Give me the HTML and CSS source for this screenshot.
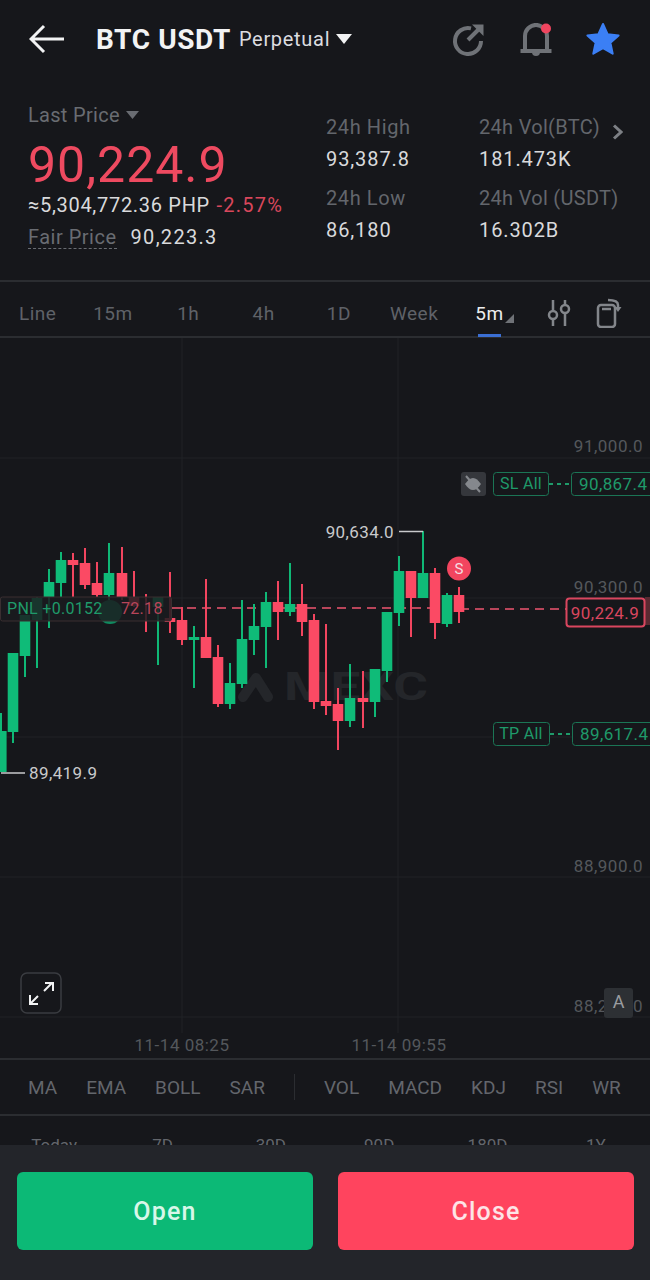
FILE: index.html
```html
<!DOCTYPE html>
<html lang="en">
<head>
<meta charset="utf-8">
<title>BTC USDT Perpetual</title>
<link rel="stylesheet" href="styles.css">
</head>
<body>
<div class="page">
  <header class="topbar">
    <svg class="back" width="36" height="30" viewBox="0 0 36 30"><path d="M35 15H2M15 2 2 15l13 13"/></svg>
    <span class="pair">BTC USDT</span>
    <span class="kind">Perpetual</span>
    <svg class="kind-caret" width="16" height="10" viewBox="0 0 16 10"><path d="M0 0h16L8 10z"/></svg>
    <div class="top-icons">
      <svg width="36" height="36" viewBox="0 0 36 36"><path class="ic-stroke" d="M20 7.400A13 13 0 1 0 30 20"/><path class="ic-stroke" d="M17 19 28 8"/><path class="ic-fill" d="M21 3.500h11.500V15z"/></svg>
      <svg width="36" height="36" viewBox="0 0 36 36"><path class="ic-stroke" d="M7 30V15a11 11 0 0 1 22 0v15M2.500 30h31M18 4V2"/><path class="ic-fill" d="M14 31h8a4 4 0 0 1-8 0z"/><circle class="ic-dot" cx="28" cy="7.500" r="5"/></svg>
      <svg width="36" height="36" viewBox="0 0 36 36"><path class="ic-star" d="M18 3l4.600 10.200 11 1.200-8.200 7.400 2.300 10.900L18 27.200 8.300 32.700l2.300-10.900L2.400 14.400l11-1.200z"/></svg>
    </div>
  </header>

  <section class="stats">
    <div class="price-col">
      <div class="last-label">Last Price <svg width="13" height="8" viewBox="0 0 13 8"><path d="M0 0h13L6.500 8z"/></svg></div>
      <div class="last-price">90,224.9</div>
      <div class="fiat">≈5,304,772.36 PHP <span class="neg">-2.57%</span></div>
      <div class="fair"><span class="fair-label">Fair Price</span><span class="fair-val">90,223.3</span></div>
    </div>
    <div class="stat-grid">
      <div class="stat stat-a"><span class="stat-label">24h High</span><span class="stat-val">93,387.8</span></div>
      <div class="stat"><span class="stat-label">24h Vol(BTC)<svg class="more" width="11" height="16" viewBox="0 0 11 16"><path d="M2 1.500 9 8l-7 6.500"/></svg></span><span class="stat-val">181.473K</span></div>
      <div class="stat stat-a"><span class="stat-label">24h Low</span><span class="stat-val">86,180</span></div>
      <div class="stat"><span class="stat-label">24h Vol (USDT)</span><span class="stat-val">16.302B</span></div>
    </div>
  </section>

  <nav class="intervals">
    <span class="iv">Line</span><span class="iv">15m</span><span class="iv">1h</span><span class="iv">4h</span><span class="iv">1D</span><span class="iv">Week</span>
    <span class="iv iv-on">5m<svg class="iv-caret" width="9" height="9" viewBox="0 0 9 9"><path d="M9 0v9H0z"/></svg></span>
    <svg class="tool-a" width="26" height="30" viewBox="0 0 26 30"><path d="M7 2v10M7 22v6M19 2v4M19 16v12"/><circle cx="7" cy="17" r="4"/><circle cx="19" cy="11" r="4"/></svg>
    <svg class="tool-b" width="26" height="30" viewBox="0 0 26 30"><rect x="2" y="7" width="17" height="22" rx="3"/><path d="M6 11h9"/><path d="M12 2c6 0 10 1 10 5v5"/><path class="tool-tip" d="M18.500 9h7L22 14z"/></svg>
  </nav>

  <div class="chart">
    <svg class="chart-svg" width="650" height="722" viewBox="0 338 650 722">
      <path class="grid" d="M0 458H650M0 598H650M0 737H650M0 877H650M0 1017H650M182 338V1033M398 338V1033"/>
      <path class="mark" d="M243 697 256 678 268 697"/>
      <text class="mark-text" x="284" y="700" textLength="144" lengthAdjust="spacingAndGlyphs">MEXC</text>

      <path class="dash-r" d="M172 608H460M460 609H566"/>

      <path class="wick-g" d="M1 713V772M13 653V743M25 615V677M37 597V668M49 569V628M61 552V597M109 543V600M158 597V665M194 626V688M230 663V709M242 600V688M254 604V655M266 592V668M290 563V616M350 664V727M375 669V717M387 612V682M399 556V626M423 531V598M447 593V627"/>
      <path class="body-g" d="M-4 731h10.600V772h-10.600zM7.700 653h10.600V732H7.700zM19.700 615h10.600V656H19.700zM31.700 598h10.600V620H31.700zM43.700 582h10.600V597H43.700zM55.700 560h10.600V583H55.700zM103.700 573h10.600V595H103.700zM152.700 597h10.600V607H152.700zM188.700 637h10.600V640H188.700zM224.700 683h10.600V704H224.700zM236.700 639h10.600V684H236.700zM248.700 626h10.600V640H248.700zM260.700 602h10.600V627H260.700zM284.700 604h10.600V612H284.700zM344.700 698h10.600V721H344.700zM369.700 669h10.600V702H369.700zM381.700 612h10.600V671H381.700zM393.700 571h10.600V613H393.700zM417.700 573h10.600V598H417.700zM441.700 595h10.600V624H441.700z"/>
      <path class="wick-r" d="M73 553V597M85 548V589M97 562V597M122 547V600M134 571V607M146 594V632M170 572V633M182 607V645M206 579V658M218 645V707M278 581V640M302 584V636M314 614V709M326 624V715M338 688V750M363 671V728M411 571V637M435 568V639M459 587V623"/>
      <path class="body-r" d="M67.700 560h10.600V565H67.700zM79.700 563h10.600V585H79.700zM91.700 583h10.600V595H91.700zM116.700 573h10.600V597H116.700zM128.700 597h10.600V606H128.700zM164.700 618h10.600V622H164.700zM176.700 620h10.600V640H176.700zM200.700 637h10.600V658H200.700zM212.700 657h10.600V704H212.700zM272.700 602h10.600V612H272.700zM296.700 604h10.600V622H296.700zM308.700 620h10.600V702H308.700zM320.700 701h10.600V706H320.700zM332.700 704h10.600V721H332.700zM357.700 698h10.600V702H357.700zM405.700 571h10.600V598H405.700zM429.700 573h10.600V623H429.700zM453.700 595h10.600V612H453.700z"/>

      <circle class="pos-dot" cx="110" cy="612" r="12"/>
      <rect class="pnl-box" x="0.500" y="597" width="171" height="24" rx="2"/>
      <text class="pnl-g" x="7" y="614">PNL +0.0152</text>
      <text class="pnl-r" x="121" y="614">72.18</text>

      <text class="axis" x="643" y="452" text-anchor="end">91,000.0</text>
      <text class="axis" x="643" y="593" text-anchor="end">90,300.0</text>
      <text class="axis" x="643" y="872" text-anchor="end">88,900.0</text>
      <text class="axis" x="643" y="1012" text-anchor="end">88,200.0</text>

      <rect class="eye-box" x="461" y="472" width="25" height="24" rx="3"/>
      <path class="eye" d="M465 484c3-4 5-6 8-6s5 2 8 6c-3 4-5 6-8 6s-5-2-8-6z"/>
      <path class="eye-cut" d="M466 476l14 16"/>

      <rect class="tag" x="493.500" y="472.500" width="55" height="23" rx="3"/>
      <text class="tag-text" x="521" y="489" text-anchor="middle">SL All</text>
      <path class="dash-g" d="M549 484H571"/>
      <rect class="tag" x="571.500" y="472.500" width="90" height="23" rx="3"/>
      <text class="tag-num" x="579" y="490">90,867.4</text>

      <rect class="tag" x="493.500" y="722.500" width="56" height="23" rx="3"/>
      <text class="tag-text" x="521" y="739" text-anchor="middle">TP All</text>
      <path class="dash-g" d="M550 734H572"/>
      <rect class="tag" x="572.500" y="722.500" width="90" height="23" rx="3"/>
      <text class="tag-num" x="580" y="740">89,617.4</text>

      <rect class="now-tail" x="645" y="597" width="6" height="28"/>
      <rect class="now-box" x="566.500" y="598.500" width="78" height="28" rx="3"/>
      <text class="now-text" x="605" y="619" text-anchor="middle">90,224.9</text>

      <path class="hl" d="M399 531.500H423"/>
      <text class="hl-text" x="394" y="538" text-anchor="end">90,634.0</text>
      <path class="hl" d="M1 773H25"/>
      <text class="hl-text" x="29" y="779">89,419.9</text>

      <circle class="s-dot" cx="459" cy="568.500" r="12"/>
      <text class="s-text" x="459" y="574" text-anchor="middle">S</text>

      <rect class="exp-box" x="21" y="973" width="40" height="40" rx="6"/>
      <path class="exp" d="M44 991 52 983M45 983h8v8M38 996l-7 7M30 995v9h8"/>
      <rect class="a-box" x="604" y="988" width="29" height="30" rx="3"/>
      <text class="a-text" x="618.500" y="1008" text-anchor="middle">A</text>

      <text class="axis" x="182" y="1051" text-anchor="middle">11-14 08:25</text>
      <text class="axis" x="399" y="1051" text-anchor="middle">11-14 09:55</text>
    </svg>
  </div>

  <nav class="indicators">
    <span>MA</span><span>EMA</span><span>BOLL</span><span>SAR</span><i class="ind-sep"></i><span>VOL</span><span>MACD</span><span>KDJ</span><span>RSI</span><span>WR</span>
  </nav>

  <nav class="ranges">
    <span>Today</span><span>7D</span><span>30D</span><span>90D</span><span>180D</span><span>1Y</span>
  </nav>

  <footer class="actions">
    <button class="btn btn-open">Open</button>
    <button class="btn btn-close">Close</button>
  </footer>
</div>
</body>
</html>
```
FILE: styles.css
```css
* { box-sizing: border-box; }
html, body { margin: 0; padding: 0; background: #16171b; }
body { font-family: Roboto, "Liberation Sans", sans-serif; color: #d9dadc; }
.page { width: 650px; height: 1280px; overflow: hidden; display: flex; flex-direction: column; }

.topbar { height: 78px; flex: none; display: flex; align-items: center; padding: 0 29px 0 29px; }
.back { flex: none; }
.back path { fill: none; stroke: #f2f3f4; stroke-width: 3; }
.pair { margin-left: 31px; font-size: 28px; font-weight: 700; color: #f2f3f4; letter-spacing: 0.6px; }
.kind { margin-left: 8px; font-size: 20px; color: #dcdde0; letter-spacing: 0.7px; }
.kind-caret { margin-left: 6px; fill: #f2f3f4; }
.top-icons { margin-left: auto; display: flex; gap: 31px; }
.ic-stroke { fill: none; stroke: #6f7277; stroke-width: 4; stroke-linejoin: round; }
.ic-fill { fill: #6f7277; }
.ic-dot { fill: #f0455f; }
.ic-star { fill: #3b7ff5; stroke: #3b7ff5; stroke-width: 2; stroke-linejoin: round; }

.stats { height: 204px; flex: none; display: flex; border-bottom: 2px solid #2b2d31; }
.price-col { width: 326px; padding: 25px 0 0 28px; }
.last-label { height: 24px; line-height: 24px; font-size: 20px; color: #696c72; letter-spacing: 0.3px; white-space: nowrap; }
.last-label svg { fill: #696c72; margin-left: 1px; vertical-align: 3px; }
.last-price { margin-top: 8px; height: 60px; line-height: 60px; font-size: 50px; color: #ee4a60; letter-spacing: 1px; }
.fiat { margin-top: -2px; height: 24px; line-height: 24px; font-size: 20px; color: #d9dadc; letter-spacing: 0.7px; white-space: nowrap; }
.neg { color: #d9475c; margin-left: 1px; letter-spacing: 1.200px; }
.fair { margin-top: 8px; height: 24px; line-height: 24px; font-size: 20px; letter-spacing: 0.5px; display: flex; gap: 14px; }
.fair-label { color: #696c72; border-bottom: 1px dashed #696c72; }
.fair-val { letter-spacing: 1.300px; }

.stat-grid { flex: 1; padding-top: 37px; display: grid; grid-template-columns: 153px 1fr; grid-auto-rows: 56px; row-gap: 15px; }
.stat { display: flex; flex-direction: column; gap: 8px; }
.stat-label { height: 24px; line-height: 24px; font-size: 20px; color: #63666c; letter-spacing: 0.3px; white-space: nowrap; }
.stat-a .stat-label { letter-spacing: 0.6px; }
.stat-val { height: 24px; line-height: 24px; font-size: 20px; color: #d9dadc; letter-spacing: 0.9px; }
.more { margin-left: 12px; vertical-align: -6px; fill: none; stroke: #7d8085; stroke-width: 3; }

.intervals { height: 56px; padding-top: 8px; display: flex; align-items: center; border-bottom: 2px solid #2b2d31; flex: none; }
.iv { width: 75.3px; text-align: center; font-size: 19px; color: #5f6268; letter-spacing: 0.5px; flex: none; }
.iv-on { color: #eceded; position: relative; height: 21px; line-height: 21px; }
.iv-on::after { content: ""; position: absolute; left: 26px; bottom: -13px; width: 23px; height: 3px; background: #3b6fd4; }
.iv-caret { fill: #6f7277; position: absolute; margin-left: 1px; top: 11px; }
.tool-a { margin-left: 19px; fill: none; stroke: #83868b; stroke-width: 2.500; flex: none; }
.tool-b { margin-left: 24px; fill: none; stroke: #83868b; stroke-width: 2.500; flex: none; }
.tool-tip { fill: #83868b; stroke: none; }

.chart { height: 722px; flex: none; border-bottom: 2px solid #2b2d31; }
.chart-svg { display: block; font-family: Roboto, "Liberation Sans", sans-serif; }
.grid { stroke: #212327; stroke-width: 1; fill: none; }
.mark { fill: none; stroke: #24262a; stroke-width: 10; stroke-linecap: round; stroke-linejoin: round; }
.mark-text { font-size: 38px; font-weight: 700; fill: #24262a; }
.wick-g { stroke: #0fb876; stroke-width: 2; fill: none; }
.body-g { fill: #0fbb78; }
.wick-r { stroke: #f2455f; stroke-width: 2; fill: none; }
.body-r { fill: #fb4a64; }
.dash-r { stroke: #b8455a; stroke-width: 2; stroke-dasharray: 9 6; fill: none; }
.pos-dot { fill: #0f8a5f; }
.pnl-box { fill: #1a1c1f; fill-opacity: 0.84; stroke: #3a2f31; }
.pnl-g { font-size: 16px; fill: #1f9a6a; letter-spacing: 0.3px; }
.pnl-r { font-size: 16px; fill: #b8455a; letter-spacing: 0.3px; }
.axis { font-size: 17px; fill: #54575c; letter-spacing: 0.5px; }
.eye-box { fill: #35373c; }
.eye { fill: #85888d; }
.eye-cut { fill: none; stroke: #85888d; stroke-width: 2; }
.tag { fill: #16171b; stroke: #1b7555; stroke-width: 1; }
.tag-text { font-size: 16px; fill: #1f9a6a; letter-spacing: 0.3px; }
.tag-num { font-size: 17px; fill: #1f9a6a; letter-spacing: 0.4px; }
.dash-g { stroke: #1f9a6a; stroke-width: 2; stroke-dasharray: 4 4; fill: none; }
.now-tail { fill: #5a2a32; }
.now-box { fill: #16171b; stroke: #d9465f; stroke-width: 2; }
.now-text { font-size: 17px; fill: #d9465f; letter-spacing: 0.4px; }
.hl { stroke: #c9cacc; stroke-width: 1.500; fill: none; }
.hl-text { font-size: 17px; fill: #c9cacc; letter-spacing: 0.4px; }
.s-dot { fill: #f2455f; }
.s-text { font-size: 15px; fill: #f4dde1; }
.exp-box { fill: #16171b; stroke: #3a3c41; stroke-width: 1.500; }
.exp { fill: none; stroke: #f2f3f4; stroke-width: 2; }
.a-box { fill: #2d3034; }
.a-text { font-size: 18px; fill: #9a9da1; }

.indicators { height: 56px; flex: none; display: flex; align-items: center; gap: 29px; padding-left: 28px; border-bottom: 2px solid #2b2d31; font-size: 19px; color: #63666c; }
.ind-sep { width: 1px; height: 26px; background: #2b2d31; }

.ranges { height: 29px; flex: none; overflow: hidden; display: grid; grid-template-columns: repeat(6, 1fr); font-size: 17px; color: #63666c; text-align: center; padding-top: 19px; line-height: 20px; }

.actions { height: 135px; flex: none; background: #23252a; display: flex; gap: 25px; padding: 27px 16px 30px 17px; }
.btn { flex: 1; height: 78px; border: 0; border-radius: 6px; font-family: Roboto, "Liberation Sans", sans-serif; font-size: 25px; font-weight: 500; letter-spacing: 1.200px; }
.btn-open { background: #0cb976; color: #d9f7e9; }
.btn-close { background: #ff445e; color: #fde4e7; }
```
